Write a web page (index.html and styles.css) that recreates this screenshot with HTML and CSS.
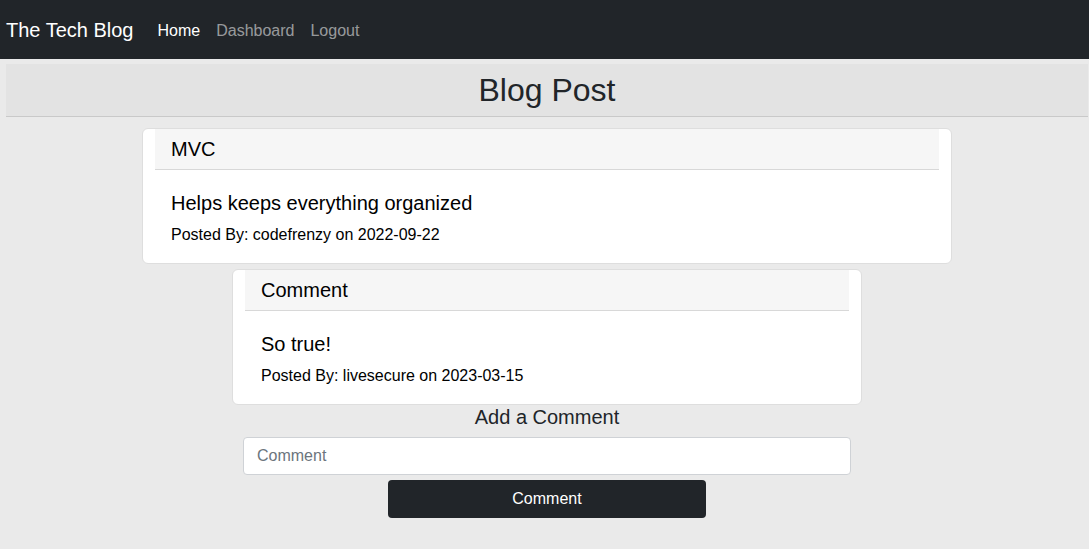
FILE: index.html
```html
<!DOCTYPE html>
<html lang="en">
<head>
<meta charset="utf-8">
<title>The Tech Blog</title>
<link rel="stylesheet" href="styles.css">
</head>
<body>
<nav class="navbar">
  <a class="brand" href="#">The Tech Blog</a>
  <ul class="nav-links">
    <li><a class="nav-link active" href="#">Home</a></li>
    <li><a class="nav-link" href="#">Dashboard</a></li>
    <li><a class="nav-link" href="#">Logout</a></li>
  </ul>
</nav>
<main class="page">
  <header class="page-header">
    <h1 class="page-title">Blog Post</h1>
  </header>
  <section class="content">
    <article class="card card-post">
      <div class="card-header">MVC</div>
      <div class="card-body">
        <p class="card-title">Helps keeps everything organized</p>
        <p class="card-meta">Posted By: codefrenzy on 2022-09-22</p>
      </div>
    </article>
    <article class="card card-comment">
      <div class="card-header">Comment</div>
      <div class="card-body">
        <p class="card-title">So true!</p>
        <p class="card-meta">Posted By: livesecure on 2023-03-15</p>
      </div>
    </article>
    <form class="comment-form">
      <h2 class="form-title">Add a Comment</h2>
      <input class="form-input" type="text" placeholder="Comment">
      <button class="form-button" type="button">Comment</button>
    </form>
  </section>
</main>
</body>
</html>
```
FILE: styles.css
```css
* { box-sizing: border-box; }
html, body { margin: 0; padding: 0; }
body {
  background: #eaeaea;
  font-family: "Liberation Sans", Arial, sans-serif;
  color: #212529;
  height: 549px;
}
.navbar {
  background: #212529;
  height: 59px;
  display: flex;
  align-items: center;
  padding: 2px 6px 0;
}
.brand {
  color: #fff;
  text-decoration: none;
  font-size: 20px;
  margin-right: 16px;
}
.nav-links {
  list-style: none;
  margin: 0;
  padding: 0;
  display: flex;
}
.nav-link {
  display: block;
  padding: 8px;
  font-size: 16px;
  color: rgba(255,255,255,0.55);
  text-decoration: none;
}
.nav-link.active { color: #fff; }
.page {
  margin: 5px 1px 0 6px;
}
.page-header {
  background: #e3e3e3;
  border-bottom: 1px solid #c9c9c9;
  padding: 7px 0;
  text-align: center;
}
.page-title {
  margin: 0;
  font-size: 32px;
  font-weight: 400;
  line-height: 38px;
  color: #212529;
}
.content {
  display: flex;
  flex-direction: column;
  align-items: center;
  padding-top: 11px;
}
.card {
  background: #fff;
  border: 1px solid #dedede;
  border-radius: 6px;
  padding: 0 12px;
}
.card-post { width: 810px; }
.card-comment { width: 630px; margin-top: 5px; }
.card-header {
  background: #f6f6f6;
  border-bottom: 1px solid #d8d8d8;
  height: 41px;
  padding: 0 16px;
  font-size: 20px;
  line-height: 40px;
  color: #000;
}
.card-body {
  padding: 21px 16px 16px;
}
.card-body p { margin: 0; color: #000; }
.card-title {
  font-size: 20px;
  line-height: 24px;
}
.card-meta {
  font-size: 16px;
  line-height: 24px;
  margin-top: 8px !important;
}
.comment-form {
  display: flex;
  flex-direction: column;
  align-items: center;
}
.form-title {
  margin: 0;
  font-size: 20px;
  font-weight: 400;
  line-height: 24px;
  color: #212529;
}
.form-input {
  margin-top: 8px;
  width: 608px;
  height: 38px;
  border: 1px solid #cfd2d6;
  border-radius: 4px;
  background: #fff;
  padding: 0 13px;
  font-family: "Liberation Sans", Arial, sans-serif;
  font-size: 16px;
  color: #212529;
}
.form-input::placeholder { color: #6c757d; }
.form-button {
  margin-top: 5px;
  width: 318px;
  height: 38px;
  border: none;
  border-radius: 4px;
  background: #212529;
  color: #fff;
  font-family: "Liberation Sans", Arial, sans-serif;
  font-size: 16px;
}
```
